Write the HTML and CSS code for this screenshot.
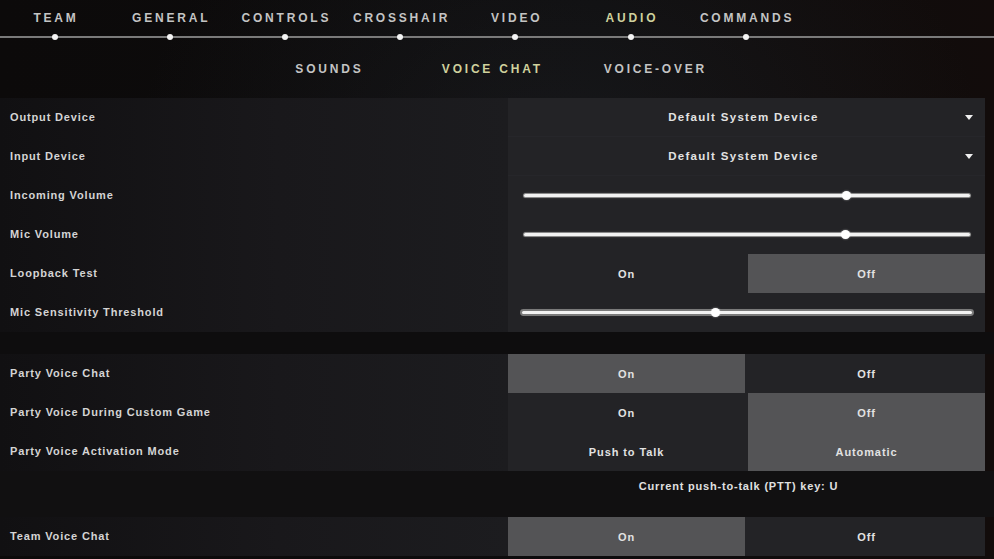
FILE: index.html
```html
<!DOCTYPE html>
<html>
<head>
<meta charset="utf-8">
<link rel="stylesheet" href="styles.css">
</head>
<body>
<div class="screen">
  <header class="head">
    <nav class="tabs">
      <div class="tab"><span class="tab-label">TEAM</span><span class="dot"></span></div>
      <div class="tab"><span class="tab-label">GENERAL</span><span class="dot"></span></div>
      <div class="tab"><span class="tab-label">CONTROLS</span><span class="dot"></span></div>
      <div class="tab"><span class="tab-label">CROSSHAIR</span><span class="dot"></span></div>
      <div class="tab"><span class="tab-label">VIDEO</span><span class="dot"></span></div>
      <div class="tab active"><span class="tab-label">AUDIO</span><span class="dot"></span></div>
      <div class="tab"><span class="tab-label">COMMANDS</span><span class="dot"></span></div>
    </nav>
    <nav class="subtabs">
      <div class="subtab">SOUNDS</div>
      <div class="subtab active">VOICE CHAT</div>
      <div class="subtab">VOICE-OVER</div>
    </nav>
  </header>

  <section class="panel">
    <div class="row">
      <div class="label">Output Device</div>
      <div class="ctrl select"><span></span><span class="select-text">Default System Device</span><span class="caret"></span></div>
    </div>
    <div class="row">
      <div class="label">Input Device</div>
      <div class="ctrl select"><span></span><span class="select-text">Default System Device</span><span class="caret"></span></div>
    </div>
    <div class="row">
      <div class="label">Incoming Volume</div>
      <div class="ctrl"><div class="slider"><span class="knob" style="left:72.2%"></span></div></div>
    </div>
    <div class="row">
      <div class="label">Mic Volume</div>
      <div class="ctrl"><div class="slider"><span class="knob" style="left:72%"></span></div></div>
    </div>
    <div class="row">
      <div class="label">Loopback Test</div>
      <div class="ctrl toggle"><div class="opt">On</div><div class="opt sel">Off</div></div>
    </div>
    <div class="row">
      <div class="label">Mic Sensitivity Threshold</div>
      <div class="ctrl"><div class="slider thick"><span class="knob" style="left:42.9%"></span></div></div>
    </div>
  </section>

  <div class="spacer"></div>

  <section class="panel">
    <div class="row">
      <div class="label">Party Voice Chat</div>
      <div class="ctrl toggle"><div class="opt sel">On</div><div class="opt">Off</div></div>
    </div>
    <div class="row">
      <div class="label">Party Voice During Custom Game</div>
      <div class="ctrl toggle"><div class="opt">On</div><div class="opt sel">Off</div></div>
    </div>
    <div class="row">
      <div class="label">Party Voice Activation Mode</div>
      <div class="ctrl toggle"><div class="opt">Push to Talk</div><div class="opt sel">Automatic</div></div>
    </div>
  </section>

  <div class="ptt"><div class="ptt-text">Current push-to-talk (PTT) key: U</div></div>

  <section class="panel">
    <div class="row">
      <div class="label">Team Voice Chat</div>
      <div class="ctrl toggle"><div class="opt sel">On</div><div class="opt">Off</div></div>
    </div>
  </section>
</div>
</body>
</html>
```

FILE: styles.css
```css
html, body {
  margin: 0;
  padding: 0;
}
body {
  width: 994px;
  height: 559px;
  overflow: hidden;
  background: #0b0909;
  font-family: "Liberation Sans", Arial, sans-serif;
  font-weight: bold;
  color: #d6d6d6;
}
.screen {
  width: 994px;
  height: 559px;
  background:
    radial-gradient(ellipse 420px 300px at 560px 140px, rgba(40,44,50,0.35), rgba(0,0,0,0)),
    linear-gradient(90deg, #0c0a0a 0%, #0d0c0d 60%, #120c0b 100%);
}
.head {
  height: 98px;
}
.tabs {
  display: flex;
  height: 46px;
  margin-left: -3px;
  width: 997px;
  padding-top: 11px;
  box-sizing: border-box;
  background: linear-gradient(#7a7a7a, #7a7a7a) no-repeat 0 36px / 100% 2px;
}
.tab {
  width: 115.2px;
  display: flex;
  flex-direction: column;
  align-items: center;
}
.tab-label {
  font-size: 12px;
  line-height: 15px;
  letter-spacing: 2.8px;
  margin-right: -2.8px;
  color: #c4c4c4;
}
.tab.active .tab-label {
  color: #cfd19d;
}
.dot {
  width: 6px;
  height: 6px;
  margin-top: 8px;
  background: #f4f4f4;
  border-radius: 50%;
}
.subtabs {
  display: flex;
  margin-left: 246.5px;
  padding-top: 16px;
}
.subtab {
  width: 163px;
  text-align: center;
  font-size: 12px;
  line-height: 15px;
  letter-spacing: 2.8px;
  text-indent: 2.8px;
  color: #c4c4c4;
}
.subtab.active {
  color: #cfd19d;
}
.panel {
  display: flex;
  flex-direction: column;
}
.row {
  display: flex;
  height: 39px;
}
.label {
  width: 508px;
  box-sizing: border-box;
  padding-left: 10px;
  padding-bottom: 1px;
  display: flex;
  align-items: center;
  font-size: 11px;
  letter-spacing: 0.85px;
  color: #d4d4d4;
  background: linear-gradient(90deg, #111012 0%, #19181b 55%, #1c1c1f 100%);
}
.ctrl {
  width: 477px;
  box-sizing: border-box;
  background: #232326;
  display: flex;
  align-items: center;
  font-size: 11px;
  letter-spacing: 0.9px;
  color: #e2e2e2;
}
.select {
  display: grid;
  grid-template-columns: 1fr auto 1fr;
  align-items: center;
  border-bottom: 1px solid #26262a;
}
.select-text {
  font-size: 11.5px;
  letter-spacing: 1.3px;
  margin-right: 6px;
}
.caret {
  justify-self: end;
  margin-right: 12px;
  width: 0;
  height: 0;
  border-left: 4px solid transparent;
  border-right: 4px solid transparent;
  border-top: 5px solid #f0f0f0;
}
.slider {
  position: relative;
  flex: 1;
  margin: 0 15px 0 16px;
  height: 3px;
  background: #f2f2f2;
  border-radius: 2px;
  box-shadow: 0 0 0 1px #8a8a8a, 0 0 3px rgba(255,255,255,0.35);
}
.slider.thick {
  margin: 0 13px 0 14px;
  box-shadow: 0 0 0 2px #7a7a7a, 0 0 3px rgba(255,255,255,0.3);
}
.knob {
  position: absolute;
  top: 50%;
  width: 9px;
  height: 9px;
  margin: -4.5px 0 0 -4.5px;
  border-radius: 50%;
  background: #ffffff;
  box-shadow: 0 0 2px rgba(255,255,255,0.6);
}
.toggle {
  gap: 3px;
  align-items: stretch;
}
.opt {
  flex: 1;
  display: flex;
  align-items: center;
  justify-content: center;
}
.opt.sel {
  background: #545456;
}
.spacer {
  height: 22px;
  background: #0e0d0e;
}
.ptt {
  height: 46px;
  background: #111011;
}
.ptt-text {
  margin-left: 508px;
  width: 477px;
  box-sizing: border-box;
  padding-right: 16px;
  padding-top: 8px;
  text-align: center;
  font-size: 11px;
  line-height: 15px;
  letter-spacing: 0.8px;
  color: #e0e0e0;
}
```
